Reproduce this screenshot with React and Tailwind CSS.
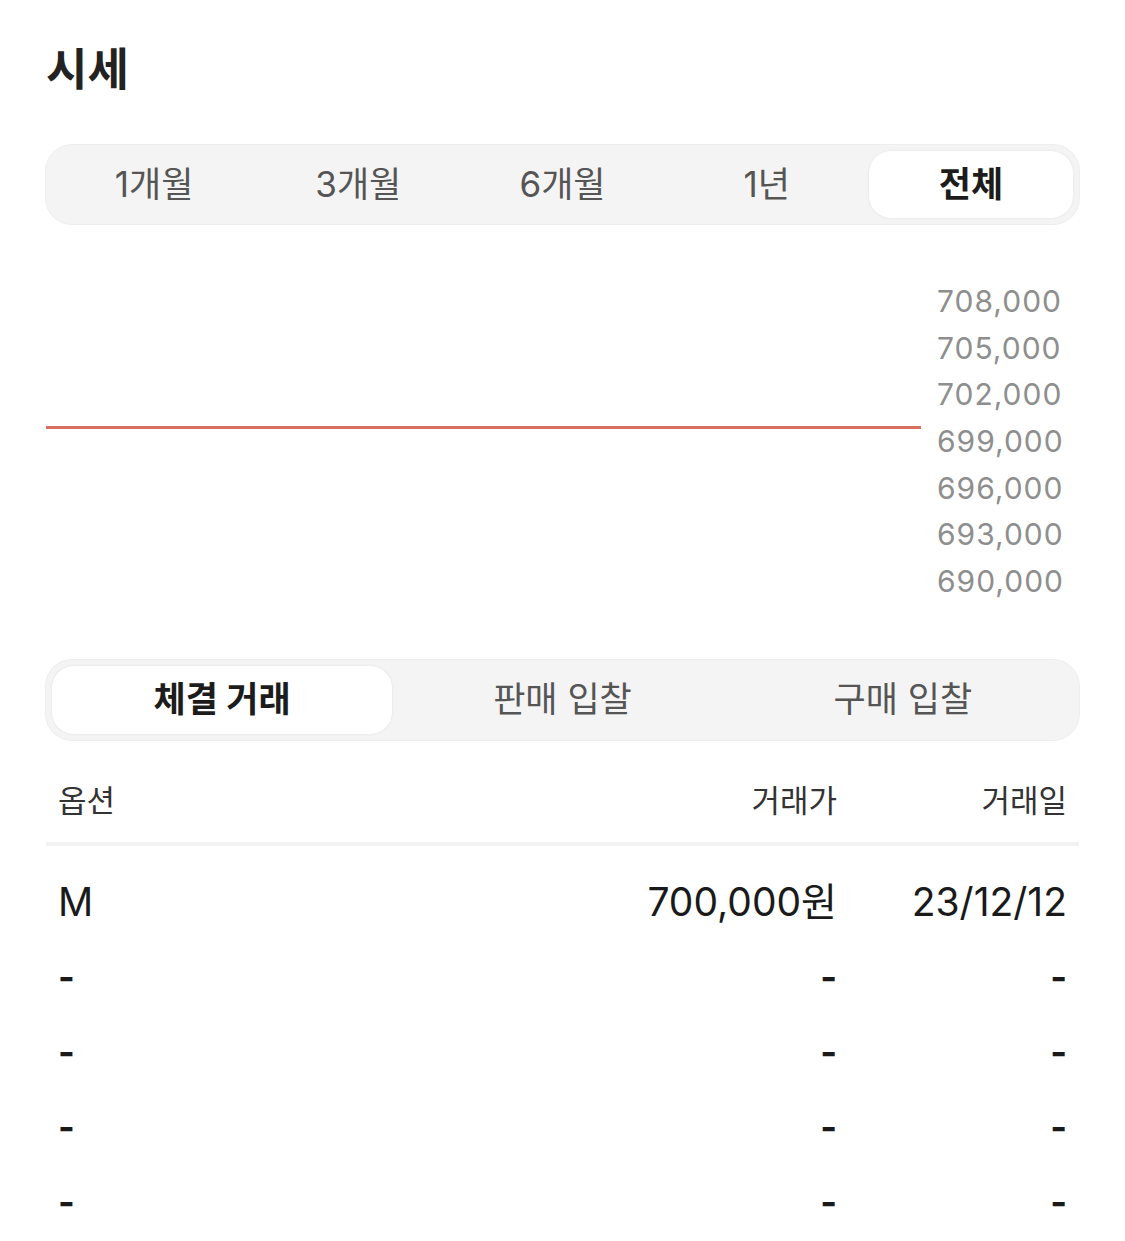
import React from "react";

const font = { fontFamily: '"Inter", "Noto Sans CJK KR", sans-serif' };

function Segmented({ items, active, h }) {
  return (
    <div className="flex rounded-[26px] bg-[#f4f4f4] p-[6px] ring-1 ring-[#eeeeee]" style={{ height: h }}>
      {items.map((t, i) => (
        <div
          key={t}
          className={
            "flex flex-1 items-center justify-center rounded-[22px] text-[35px] " +
            (i === active
              ? "bg-white font-bold text-[#1c1c1c] shadow-[0_0_3px_rgba(0,0,0,0.08)]"
              : "text-[#555555]")
          }
        >
          {t}
        </div>
      ))}
    </div>
  );
}

export default function App() {
  const labels = ["708,000", "705,000", "702,000", "699,000", "696,000", "693,000", "690,000"];
  const rows = [
    ["M", "700,000원", "23/12/12"],
    ["-", "-", "-"],
    ["-", "-", "-"],
    ["-", "-", "-"],
    ["-", "-", "-"],
  ];
  const top = 23.3 + ((708000 - 700000) / 3000) * 46.67 + 2;
  const cell = (v) => (v === "-" ? "font-bold text-[36px]" : "text-[39px]");
  return (
    <div className="min-h-[1241px] w-[1125px] bg-white px-[46px] pt-[40px]" style={font}>
      <div className="text-[45px] font-bold leading-[60px] text-[#222222]">시세</div>
      <div className="mt-[45px]">
        <Segmented items={["1개월", "3개월", "6개월", "1년", "전체"]} active={4} h={79} />
      </div>
      <div className="mt-[54px] flex">
        <div className="relative flex-1">
          <div className="absolute left-0 right-0 h-[3px] bg-[#d9705f]" style={{ top: top - 1.5 }} />
        </div>
        <div className="w-[158px] pl-[16px]">
          {labels.map((l) => (
            <div key={l} className="h-[46.67px] text-[30px] leading-[46.67px] tracking-[1px] text-[#8e8e8e]">
              {l}
            </div>
          ))}
        </div>
      </div>
      <div className="mt-[55px]">
        <Segmented items={["체결 거래", "판매 입찰", "구매 입찰"]} active={0} h={80} />
      </div>
      <div className="mt-[32px] flex h-[60px] items-center px-[12px] text-[31px] text-[#333333]">
        <div className="flex-1">옵션</div>
        <div className="w-[300px] text-right">거래가</div>
        <div className="w-[230px] text-right">거래일</div>
      </div>
      <div className="mt-[10px] h-[4px] bg-[#f2f2f2]" />
      <div className="mt-[19px]">
        {rows.map((r, i) => (
          <div key={i} className="flex h-[75px] items-center px-[12px] text-[#1a1a1a]">
            <div className={"flex-1 " + cell(r[0])}>{r[0]}</div>
            <div className={"w-[300px] text-right " + cell(r[1])}>{r[1]}</div>
            <div className={"w-[230px] text-right " + cell(r[2])}>{r[2]}</div>
          </div>
        ))}
      </div>
    </div>
  );
}
